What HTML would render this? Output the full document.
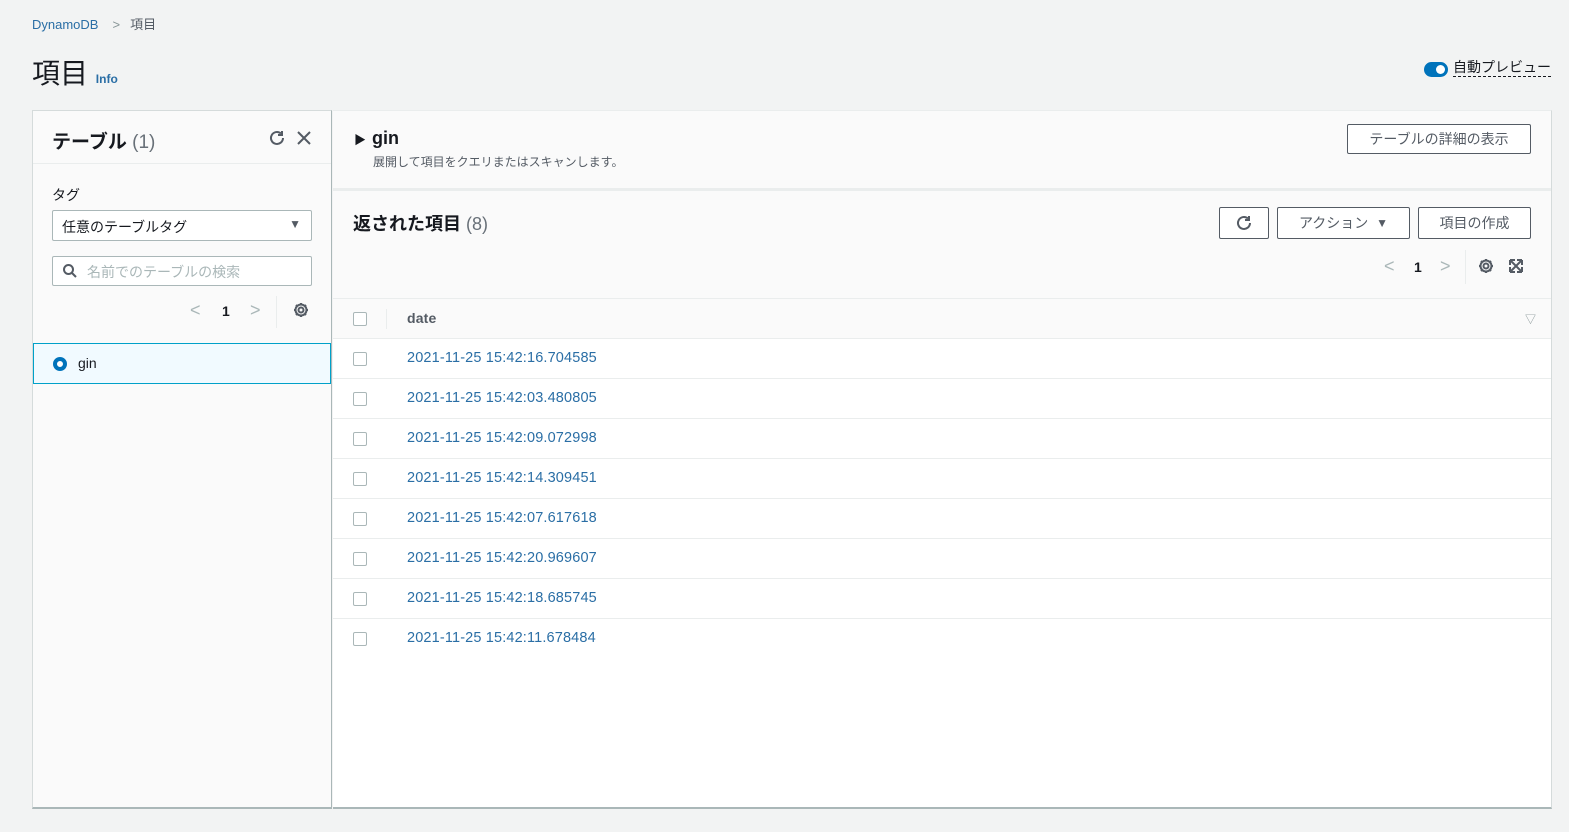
<!DOCTYPE html>
<html><head><meta charset="utf-8"><style>
*{box-sizing:border-box;margin:0;padding:0}
body{width:1569px;height:832px;background:#f2f3f3;font-family:"Liberation Sans","Noto Sans CJK JP",sans-serif;color:#16191f;position:relative;overflow:hidden;font-size:14px}
.a{position:absolute}
.link{color:#2a6ea5}
.btn{position:absolute;border:1px solid #545b64;border-radius:2px;background:#fff;color:#545b64;font-size:14px;display:flex;align-items:center;justify-content:center}
.row{position:absolute;left:333px;width:1218px;height:40px;border-bottom:1px solid #eaeded;background:#fff}
.cb{position:absolute;left:20px;top:13px;width:14px;height:14px;border:1px solid #aab7b8;border-radius:2px;background:#fff}
.row span{position:absolute;left:74px;top:11px;color:#2a6ea5;font-size:14.5px;letter-spacing:0.15px}
</style></head><body>
<div class="a" style="left:32px;top:14px;font-size:13px"><span class="link">DynamoDB</span><span style="color:#879596;margin:0 10px 0 14px">&gt;</span><span style="color:#545b64">項目</span></div>
<div class="a" style="left:32px;top:52px;font-size:28px">項目 <span style="font-size:12px;font-weight:bold;color:#2a6ea5">Info</span></div>
<div class="a" style="left:1424px;top:62px;width:24px;height:15px;border-radius:8px;background:#0073bb"><div style="position:absolute;right:3px;top:3px;width:9px;height:9px;border-radius:50%;background:#fff"></div></div>
<div class="a" style="left:1453px;top:59px;font-size:14px;border-bottom:1px dashed #16191f;line-height:17px">自動プレビュー</div>

<div class="a" style="left:32px;top:110px;width:300px;height:699px;background:#fafafa;border:1px solid #d5dbdb;border-bottom:2px solid #aab7b8;border-right:1px solid #aab7b8"></div>
<div class="a" style="left:52px;top:127px;font-size:19px;font-weight:bold">テーブル <span style="font-weight:normal;color:#687078">(1)</span></div>
<svg class="a" style="left:268px;top:129px" width="18" height="18" viewBox="0 0 18 18" fill="none" stroke="#545b64" stroke-width="2"><path d="M15 9a6 6 0 1 1-2-4.5"/><path d="M14 2v4h-4"/></svg>
<svg class="a" style="left:296px;top:130px" width="16" height="16" viewBox="0 0 16 16" stroke="#545b64" stroke-width="2"><path d="M2 2l12 12M14 2L2 14"/></svg>
<div class="a" style="left:33px;top:163px;width:298px;border-top:1px solid #eaeded"></div>
<div class="a" style="left:52px;top:185px;font-size:14px">タグ</div>
<div class="a" style="left:52px;top:210px;width:260px;height:31px;border:1px solid #aab7b8;border-radius:2px;background:#fff;padding:6px 9px;font-size:14px">任意のテーブルタグ<span style="position:absolute;right:10px;top:6px;font-size:12px;color:#545b64">▼</span></div>
<div class="a" style="left:52px;top:256px;width:260px;height:30px;border:1px solid #aab7b8;border-radius:2px;background:#fff;padding:5px 0 0 34px;font-size:14px;color:#aab7b8">名前でのテーブルの検索</div>
<svg class="a" style="left:62px;top:263px" width="16" height="16" viewBox="0 0 16 16" fill="none" stroke="#545b64" stroke-width="2"><circle cx="6.5" cy="6.5" r="4.5"/><path d="M10 10l4 4"/></svg>
<div class="a" style="left:190px;top:300px;color:#aab7b8;font-size:18px">&lt;</div>
<div class="a" style="left:222px;top:303px;font-weight:bold;font-size:14px">1</div>
<div class="a" style="left:250px;top:300px;color:#aab7b8;font-size:18px">&gt;</div>
<div class="a" style="left:276px;top:296px;height:32px;border-left:1px solid #eaeded"></div>
<svg class="a" style="left:292px;top:301px" width="18" height="18" viewBox="0 0 18 18" fill="none" stroke="#545b64" stroke-width="2"><circle cx="9" cy="9" r="2.5"/><path d="M9 2v2M9 14v2M2 9h2M14 9h2M4 4l1.5 1.5M12.5 12.5L14 14M4 14l1.5-1.5M12.5 5.5L14 4"/><circle cx="9" cy="9" r="5.5"/></svg>
<div class="a" style="left:33px;top:343px;width:298px;height:41px;background:#f1faff;border:1px solid #00a1c9"></div>
<div class="a" style="left:53px;top:357px;width:14px;height:14px;border-radius:50%;border:4px solid #0073bb;background:#fff"></div>
<div class="a" style="left:78px;top:355px;font-size:14px">gin</div>

<div class="a" style="left:333px;top:110px;width:1219px;height:699px;background:#fff;border-top:1px solid #eaeded;border-right:1px solid #d5dbdb;border-bottom:2px solid #aab7b8"></div>
<div class="a" style="left:333px;top:111px;width:1218px;height:77px;background:#fafafa"></div>
<div class="a" style="left:333px;top:188px;width:1218px;height:3px;background:#eaeded"></div>
<div class="a" style="left:333px;top:191px;width:1218px;height:108px;background:#fafafa;border-bottom:1px solid #eaeded"></div>
<div class="a" style="left:354px;top:128px;font-size:18px;font-weight:bold"><span style="font-size:12px;margin-right:6px">▶</span>gin</div>
<div class="a" style="left:373px;top:153px;font-size:12px;color:#545b64">展開して項目をクエリまたはスキャンします。</div>
<div class="btn" style="left:1347px;top:124px;width:184px;height:30px">テーブルの詳細の表示</div>
<div class="a" style="left:353px;top:210px;font-size:18px;font-weight:bold">返された項目 <span style="font-weight:normal;color:#687078">(8)</span></div>
<div class="btn" style="left:1219px;top:207px;width:50px;height:32px"><svg width="18" height="18" viewBox="0 0 18 18" fill="none" stroke="#545b64" stroke-width="2"><path d="M15 9a6 6 0 1 1-2-4.5"/><path d="M14 2v4h-4"/></svg></div>
<div class="btn" style="left:1277px;top:207px;width:133px;height:32px">アクション&nbsp;&nbsp;<span style="font-size:12px">▼</span></div>
<div class="btn" style="left:1418px;top:207px;width:113px;height:32px">項目の作成</div>
<div class="a" style="left:1384px;top:256px;color:#aab7b8;font-size:18px">&lt;</div>
<div class="a" style="left:1414px;top:259px;font-weight:bold">1</div>
<div class="a" style="left:1440px;top:256px;color:#aab7b8;font-size:18px">&gt;</div>
<div class="a" style="left:1465px;top:250px;height:34px;border-left:1px solid #eaeded"></div>
<svg class="a" style="left:1477px;top:257px" width="18" height="18" viewBox="0 0 18 18" fill="none" stroke="#545b64" stroke-width="2"><circle cx="9" cy="9" r="2.5"/><path d="M9 2v2M9 14v2M2 9h2M14 9h2M4 4l1.5 1.5M12.5 12.5L14 14M4 14l1.5-1.5M12.5 5.5L14 4"/><circle cx="9" cy="9" r="5.5"/></svg>
<svg class="a" style="left:1508px;top:258px" width="16" height="16" viewBox="0 0 16 16" fill="none" stroke="#545b64" stroke-width="2"><path d="M2 2h5M2 2v5M14 2h-5M14 2v5M2 14h5M2 14v-5M14 14h-5M14 14v-5M2 2l12 12M14 2L2 14"/></svg>
<div class="row" style="top:299px;background:#fafafa"><div class="cb" style="top:13px"></div><div style="position:absolute;left:53px;top:10px;height:20px;border-left:1px solid #eaeded"></div><span style="color:#545b64;font-weight:bold;font-size:14px">date</span><span style="left:1192px;top:12px;color:#879596;font-size:11px">▽</span></div>
<div class="row" style="top:339px"><div class="cb"></div><span>2021-11-25 15:42:16.704585</span></div>
<div class="row" style="top:379px"><div class="cb"></div><span>2021-11-25 15:42:03.480805</span></div>
<div class="row" style="top:419px"><div class="cb"></div><span>2021-11-25 15:42:09.072998</span></div>
<div class="row" style="top:459px"><div class="cb"></div><span>2021-11-25 15:42:14.309451</span></div>
<div class="row" style="top:499px"><div class="cb"></div><span>2021-11-25 15:42:07.617618</span></div>
<div class="row" style="top:539px"><div class="cb"></div><span>2021-11-25 15:42:20.969607</span></div>
<div class="row" style="top:579px"><div class="cb"></div><span>2021-11-25 15:42:18.685745</span></div>
<div class="row" style="top:619px;border-bottom:none"><div class="cb"></div><span>2021-11-25 15:42:11.678484</span></div>
</body></html>
